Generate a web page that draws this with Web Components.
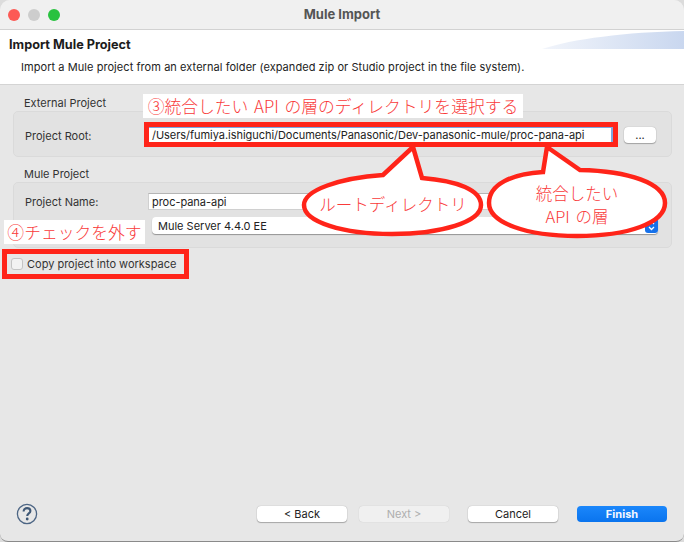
<!DOCTYPE html>
<html>
<head>
<meta charset="utf-8">
<title>Mule Import</title>
<style>
  html, body { margin: 0; height: 100%; background: #dcdcdc; }
  body { font-family: "Inter", "Liberation Sans", sans-serif; }
</style>
</head>
<body>
<mule-dialog>
  <group-box slot="main" title="External Project" style="--box-h:46px;--pad-top:15px">
    <field-row label="Project Root:">
      <text-input value="/Users/fumiya.ishiguchi/Documents/Panasonic/Dev-panasonic-mule/proc-pana-api" focused></text-input>
      <push-button slot="after" label="..." style="--w:32px;margin-left:4px;margin-top:-2px"></push-button>
    </field-row>
  </group-box>
  <group-box slot="main" title="Mule Project" style="--box-h:66px;--pad-top:10px">
    <field-row label="Project Name:">
      <text-input value="proc-pana-api"></text-input>
    </field-row>
    <field-row label="">
      <combo-box value="Mule Server 4.4.0 EE"></combo-box>
    </field-row>
  </group-box>
  <check-row slot="main" label="Copy project into workspace"></check-row>
</mule-dialog>
<annotation-layer></annotation-layer>

<script>
// === <mule-dialog> ===
class MuleDialogElement extends HTMLElement {
  constructor() {
    super();
    this.attachShadow({ mode: 'open' });
    this.shadowRoot.innerHTML = `
      <style>
        :host {
          display: flex;
          flex-direction: column;
          height: 542px;
          background: #e7e7e7;
          border-radius: 10px 10px 8px 8px;
          overflow: hidden;
          box-sizing: border-box;
          border-bottom: 1px solid #8a8a8a;
          font-family: "Inter", "Liberation Sans", sans-serif;
          color: #2a2a2a;
          font-size: 11px;
        }
        .title {
          height: 29px;
          flex: none;
          display: flex;
          align-items: center;
          position: relative;
          justify-content: center;
          box-sizing: content-box;
          background: #f0f0f0;
          border-bottom: 1px solid #d2d2d2;
          font-weight: 700;
          font-size: 13px;
          color: #555;
        }
        .title span { margin-top: -1px; }
        .lights {
          position: absolute;
          left: 8px;
          top: 9px;
          display: flex;
          gap: 8px;
        }
        .lights i { width: 12px; height: 12px; border-radius: 50%; display: block; }
        .head {
          height: 55px;
          flex: none;
          box-sizing: border-box;
          background: #fff;
          border-bottom: 1px solid #d4d4d4;
          padding: 8px 9px 0;
          position: relative;
        }
        .head h1 { margin: 0; font-size: 12.7px; line-height: 14px; font-weight: 700; color: #1c1c1c; }
        .head p { margin: 8px 0 0 12px; font-size: 11px; line-height: 14px; color: #222; letter-spacing: .06px; }
        .banner { position: absolute; right: 0; top: 0; }
        .main {
          flex: 1;
          display: flex;
          flex-direction: column;
          padding: 11px 12px 0 13px;
          min-height: 0;
        }
        .foot {
          flex: none;
          height: 46px;
          box-sizing: border-box;
          display: flex;
          align-items: flex-start;
          padding: 9px 17px 0 16px;
        }
        .help { display: block; margin-top: -1px; }
        .btns { margin-left: auto; display: flex; gap: 19px; padding-top: 2px; }
        .btns .back { margin-right: -7px; }
      </style>
      <div class="title">
        <div class="lights">
          <i style="background:#fc5a55"></i>
          <i style="background:#cdcdcd"></i>
          <i style="background:#29c23f"></i>
        </div>
        <span>Mule Import</span>
      </div>
      <div class="head">
        <svg class="banner" width="142" height="19" viewBox="0 0 142 19">
          <defs>
            <linearGradient id="bn" x1="0" x2="1" y1="0" y2="0">
              <stop offset="0" stop-color="#f2f5fb"/>
              <stop offset="1" stop-color="#c9d7ef"/>
            </linearGradient>
          </defs>
          <path d="M0 19 C30 9 85 2 142 1 V19 Z" fill="url(#bn)"/>
        </svg>
        <h1>Import Mule Project</h1>
        <p>Import a Mule project from an external folder (expanded zip or Studio project in the file system).</p>
      </div>
      <div class="main"><slot name="main"></slot></div>
      <div class="foot">
        <svg class="help" width="22" height="22" viewBox="0 0 22 22">
          <circle cx="11" cy="11" r="9.6" fill="none" stroke="#4c6584" stroke-width="1.3"/>
          <path d="M7.6 8.4c0-2.1 1.6-3.3 3.5-3.3s3.3 1.2 3.3 2.9c0 2.5-3.2 2.4-3.2 5" fill="none" stroke="#3f5876" stroke-width="2.1"/>
          <circle cx="11.2" cy="16" r="1.4" fill="#3f5876"/>
        </svg>
        <div class="btns">
          <push-button class="back" label="&lt; Back" style="--w:90px"></push-button>
          <push-button label="Next &gt;" disabled style="--w:90px"></push-button>
          <push-button label="Cancel" style="--w:90px"></push-button>
          <push-button label="Finish" primary style="--w:90px"></push-button>
        </div>
      </div>
    `;
  }
}

// === <group-box> ===
class GroupBoxElement extends HTMLElement {
  constructor() {
    super();
    this.attachShadow({ mode: 'open' });
    this.shadowRoot.innerHTML = `
      <style>
        :host { display: block; margin-bottom: 10px; }
        .cap { height: 15px; line-height: 15px; padding-left: 11px; color: #333; font-size: 11px; }
        .box {
          height: var(--box-h);
          box-sizing: border-box;
          background: #e2e2e2;
          border: 1px solid #dadada;
          border-radius: 5px;
          padding: var(--pad-top, 10px) 15px 0 11px;
          display: flex;
          flex-direction: column;
          gap: 7px;
        }
      </style>
      <div class="cap"></div>
      <div class="box"><slot></slot></div>
    `;
  }
  connectedCallback() {
    this.shadowRoot.querySelector('.cap').textContent = this.getAttribute('title') || '';
    this.removeAttribute('title');
  }
}

// === <field-row> ===
class FieldRowElement extends HTMLElement {
  constructor() {
    super();
    this.attachShadow({ mode: 'open' });
    this.shadowRoot.innerHTML = `
      <style>
        :host { display: flex; align-items: center; gap: 8px; font-size: 11px; color: #333; }
        .lbl { width: 115px; flex: none; }
        .mid { flex: 1; min-width: 0; }
      </style>
      <span class="lbl"></span>
      <div class="mid"><slot></slot></div>
      <slot name="after"></slot>
    `;
  }
  connectedCallback() {
    this.shadowRoot.querySelector('.lbl').textContent = this.getAttribute('label') || '';
  }
}

// === <text-input> ===
class TextInputElement extends HTMLElement {
  constructor() {
    super();
    this.attachShadow({ mode: 'open' });
    this.shadowRoot.innerHTML = `
      <style>
        :host {
          display: block;
          height: 17px;
          line-height: 16px;
          box-sizing: border-box;
          background: #fff;
          border: 1px solid #d0d0d0;
          border-top-color: #b5b5b5;
          padding-left: 3px;
          font-size: 11px;
          letter-spacing: -.04px;
          color: #222;
          white-space: nowrap;
          overflow: hidden;
        }
        :host([focused]) { outline: 2px solid #7da7e0; outline-offset: -1px; line-height: 15px; }
      </style>
      <span></span>
    `;
  }
  connectedCallback() {
    this.shadowRoot.querySelector('span').textContent = this.getAttribute('value') || '';
  }
}

// === <combo-box> ===
class ComboBoxElement extends HTMLElement {
  constructor() {
    super();
    this.attachShadow({ mode: 'open' });
    this.shadowRoot.innerHTML = `
      <style>
        :host {
          display: flex;
          align-items: center;
          height: 17px;
          margin-left: 4px;
          margin-right: -2px;
          box-sizing: border-box;
          background: #fff;
          border-radius: 4px;
          box-shadow: 0 1px 1px rgba(0,0,0,.35);
          padding-left: 6px;
          font-size: 11px;
          color: #222;
        }
        span { flex: 1; }
        svg { flex: none; }
      </style>
      <span></span>
      <svg width="13" height="15" viewBox="0 0 13 15">
        <rect width="13" height="15" rx="3" fill="#1671ea"/>
        <path d="M4 6l2.5-2.5L9 6M4 9l2.5 2.5L9 9" fill="none" stroke="#fff" stroke-width="1.3"/>
      </svg>
    `;
  }
  connectedCallback() {
    this.shadowRoot.querySelector('span').textContent = this.getAttribute('value') || '';
  }
}

// === <push-button> ===
class PushButtonElement extends HTMLElement {
  constructor() {
    super();
    this.attachShadow({ mode: 'open' });
    this.shadowRoot.innerHTML = `
      <style>
        :host {
          display: block;
          width: var(--w, 90px);
          height: 16px;
          line-height: 16px;
          flex: none;
          text-align: center;
          background: #fff;
          border-radius: 4px;
          box-shadow: 0 0 1px rgba(0,0,0,.35), 0 1px 1px rgba(0,0,0,.25);
          font-size: 11px;
          color: #222;
        }
        :host([disabled]) { background: #f0f0f0; color: #aeaeae; box-shadow: 0 0 1px rgba(0,0,0,.2); }
        :host([primary]) { background: linear-gradient(#1b87fb, #0a74ee); color: #f4f8ff; font-weight: 700; box-shadow: none; }
      </style>
      <span></span>
    `;
  }
  connectedCallback() {
    this.shadowRoot.querySelector('span').textContent = this.getAttribute('label') || '';
  }
}

// === <check-row> ===
class CheckRowElement extends HTMLElement {
  constructor() {
    super();
    this.attachShadow({ mode: 'open' });
    this.shadowRoot.innerHTML = `
      <style>
        :host { display: flex; align-items: center; gap: 4px; height: 14px; margin: -1px 0 0 -2px; font-size: 11px; color: #333; }
        i { width: 12px; height: 12px; box-sizing: border-box; background: #f2f2f2; border: 1px solid #c4c4c4; border-radius: 3px; display: block; }
      </style>
      <i></i><span></span>
    `;
  }
  connectedCallback() {
    this.shadowRoot.querySelector('span').textContent = this.getAttribute('label') || '';
  }
}

// === <annotation-layer> : red marks pasted over the screenshot ===
class AnnotationLayerElement extends HTMLElement {
  constructor() {
    super();
    this.attachShadow({ mode: 'open' });
    this.shadowRoot.innerHTML = `
      <style>
        :host { position: absolute; left: 0; top: 0; width: 684px; height: 542px; pointer-events: none; }
        svg { position: absolute; left: 0; top: 0; }
        .t {
          position: absolute;
          font-family: "Noto Sans CJK JP", "Liberation Sans", sans-serif;
          font-weight: 300;
          color: #f93a3a;
          word-spacing: 2px;
          white-space: nowrap;
          text-align: center;
        }
        .w { background: #fff; height: 24px; line-height: 24px; font-size: 16.8px; }
      </style>
      <svg width="684" height="542" viewBox="0 0 684 542" fill="#fff" stroke="#ff2419" stroke-width="4.5">
        <rect x="146.5" y="124.5" width="469" height="20" fill="none" stroke-width="5"/>
        <rect x="4.5" y="251.5" width="182" height="25" fill="none" stroke-width="5"/>
        <path d="M413 147 L422 178 C458 181 481 190 481 205 C481 222 441 234 392 234 C343 234 304 222 304 205 C304 190 340 178 383 175 Z"/>
        <path d="M547 147 L580 170 C628 171 665 183 665 203 C665 223 628 236 577 236 C527 236 489 223 489 203 C489 184 512 174 543 172 Z"/>
      </svg>
      <div class="t w" style="left:143px;top:94px;width:380px">③統合したい API の層のディレクトリを選択する</div>
      <div class="t w" style="left:4px;top:220px;width:141px">④チェックを外す</div>
      <div class="t" style="left:303px;top:192px;width:180px;font-size:16.5px;line-height:24px">ルートディレクトリ</div>
      <div class="t" style="left:487px;top:182px;width:180px;font-size:16.5px;line-height:23px">統合したい<br>API の層</div>
    `;
  }
}

// Register all components
customElements.define('mule-dialog', MuleDialogElement);
customElements.define('group-box', GroupBoxElement);
customElements.define('field-row', FieldRowElement);
customElements.define('text-input', TextInputElement);
customElements.define('combo-box', ComboBoxElement);
customElements.define('push-button', PushButtonElement);
customElements.define('check-row', CheckRowElement);
customElements.define('annotation-layer', AnnotationLayerElement);
</script>
</body>
</html>
